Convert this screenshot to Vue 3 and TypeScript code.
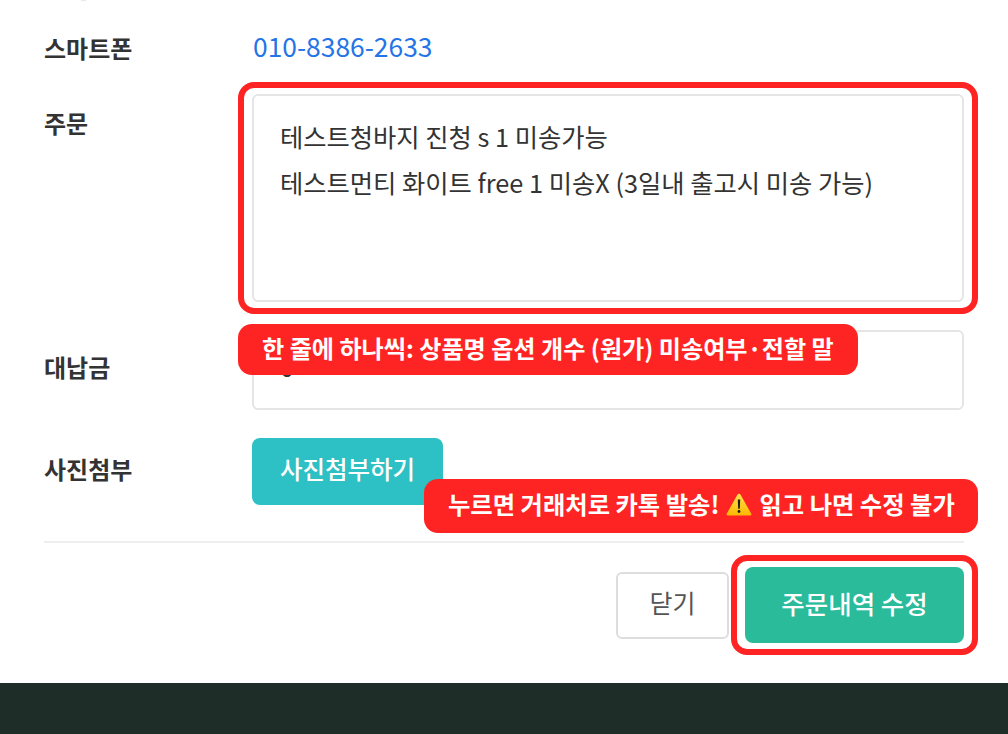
<script setup lang="ts">
const orderLines: string[] = [
  '테스트청바지 진청 s 1 미송가능',
  '테스트먼티 화이트 free 1 미송X (3일내 출고시 미송 가능)',
]
</script>

<template>
  <div class="page">
    <main class="sheet">
      <div class="crumb"><span class="crumb-mark"></span></div>
      <div class="row row-phone">
        <div class="label">스마트폰</div>
        <a class="phone">010-8386-2633</a>
      </div>
      <div class="row row-order">
        <div class="label label-order">주문</div>
        <div class="field-wrap">
          <div class="order-box">
            <p v-for="line in orderLines" :key="line" class="order-line">{{ line }}</p>
          </div>
          <div class="ring ring-order"></div>
        </div>
      </div>
      <div class="row row-cod">
        <div class="label label-up">대납금</div>
        <div class="field-wrap">
          <div class="cod-box">0</div>
          <div class="tag tag-order">한 줄에 하나씩: 상품명 옵션 개수 (원가) 미송여부·전할 말</div>
        </div>
      </div>
      <div class="row row-photo">
        <div class="label label-up">사진첨부</div>
        <div class="field-wrap">
          <button class="photo-btn" type="button">사진첨부하기</button>
          <div class="tag tag-send">
            <span>누르면 거래처로 카톡 발송!</span>
            <svg class="warn" viewBox="0 0 26 23" aria-hidden="true">
              <defs>
                <linearGradient id="warn-fill" x1="0" y1="0" x2="0" y2="1">
                  <stop offset="0" stop-color="#ffe14d" />
                  <stop offset="1" stop-color="#fdb800" />
                </linearGradient>
              </defs>
              <path d="M13 .8c.7 0 1.2.4 1.6 1l10.7 19c.4.8-.1 1.7-1 1.7H1.7c-.9 0-1.4-.9-1-1.7l10.7-19c.4-.6.9-1 1.6-1z" fill="url(#warn-fill)" />
              <path d="M11.8 6.6h2.4l-.4 9.2h-1.6z" fill="#1c1c1c" />
              <circle cx="13" cy="18.5" r="1.4" fill="#1c1c1c" />
            </svg>
            <span>읽고 나면 수정 불가</span>
          </div>
        </div>
      </div>
      <div class="actions">
        <button class="close-btn" type="button">닫기</button>
        <div class="submit-wrap">
          <button class="submit-btn" type="button">주문내역 수정</button>
          <div class="ring ring-submit"></div>
        </div>
      </div>
    </main>
    <footer class="footer"></footer>
  </div>
</template>

<style>
html,
body {
  margin: 0;
  background: #fff;
}
</style>

<style scoped>
.page {
  width: 1008px;
  height: 734px;
  overflow: hidden;
  display: flex;
  flex-direction: column;
  font-family: "Noto Sans CJK KR", "Noto Sans", sans-serif;
  color: #333;
  background: #fff;
}
.sheet {
  height: 683px;
  box-sizing: border-box;
  padding: 0 44px;
  display: flex;
  flex-direction: column;
}
.crumb {
  height: 30px;
}
.crumb-mark {
  display: block;
  width: 5px;
  height: 1px;
  margin-left: 37px;
  background: #e8e8e8;
}
.row {
  display: grid;
  grid-template-columns: 208px 712px;
  align-items: center;
}
.row-phone {
  height: 36px;
  margin-bottom: 28px;
}
.row-order {
  align-items: start;
  margin-bottom: 28px;
}
.row-cod {
  margin-bottom: 28px;
}
.row-photo {
  margin-bottom: 36px;
}
.label {
  font-size: 24px;
  line-height: 36px;
  font-weight: 700;
  color: #333;
  white-space: nowrap;
}
.label-order {
  margin-top: 11px;
}
.label-up {
  margin-bottom: 6px;
}
.phone {
  align-self: start;
  font-size: 26.4px;
  line-height: 32px;
  color: #2474e8;
  padding-left: 1px;
}
.field-wrap {
  position: relative;
}
.order-box {
  height: 208px;
  box-sizing: border-box;
  border: 2px solid #e5e5e5;
  border-radius: 6px;
  padding: 17px 26px;
  background: #fff;
}
.order-line {
  margin: 0;
  font-size: 25.3px;
  line-height: 46px;
  color: #333;
  white-space: nowrap;
}
.ring {
  position: absolute;
  box-sizing: border-box;
  border: 6px solid #ff2424;
  border-radius: 16px;
  pointer-events: none;
}
.ring-order {
  inset: -12px -14px -12px -14px;
}
.ring-submit {
  inset: -12px -14px -12px -14px;
}
.cod-box {
  height: 80px;
  box-sizing: border-box;
  border: 2px solid #e5e5e5;
  border-radius: 6px;
  padding: 11px 26px;
  font-size: 25.3px;
  line-height: 46px;
  color: #333;
  background: #fff;
}
.tag {
  position: absolute;
  box-sizing: border-box;
  display: flex;
  align-items: center;
  background: #ff2424;
  color: #fff;
  font-weight: 700;
  font-size: 24.1px;
  border-radius: 14px;
  white-space: nowrap;
}
.tag-order {
  left: -14px;
  top: -6px;
  width: 620px;
  height: 51px;
  padding-left: 24px;
  padding-bottom: 5px;
}
.tag-send {
  left: 172px;
  top: 41px;
  width: 554px;
  height: 54px;
  padding-left: 24px;
  padding-bottom: 5px;
  gap: 7px;
  font-size: 24.3px;
}
.warn {
  width: 26px;
  height: 23px;
  flex: none;
  margin-top: 2px;
}
.photo-btn {
  width: 191px;
  height: 67px;
  display: block;
  border: 0;
  border-radius: 8px;
  padding: 0 0 6px;
  background: #2dc0c4;
  color: #fff;
  font-family: inherit;
  font-size: 24.5px;
  font-weight: 500;
}
.actions {
  border-top: 2px solid #eeeeee;
  padding-top: 24px;
  display: flex;
  justify-content: flex-end;
  align-items: center;
  gap: 16px;
}
.close-btn {
  width: 113px;
  height: 67px;
  box-sizing: border-box;
  border: 2px solid #dddddd;
  border-radius: 6px;
  padding: 0 0 6px;
  background: #fff;
  color: #555;
  font-family: inherit;
  font-size: 25px;
}
.submit-wrap {
  position: relative;
}
.submit-btn {
  display: block;
  width: 219px;
  height: 76px;
  border: 0;
  border-radius: 8px;
  padding: 0 0 6px;
  background: #2abb9b;
  color: #fff;
  font-family: inherit;
  font-size: 25.5px;
  font-weight: 500;
}
.footer {
  flex: 1;
  background: #1f2d28;
}
</style>
